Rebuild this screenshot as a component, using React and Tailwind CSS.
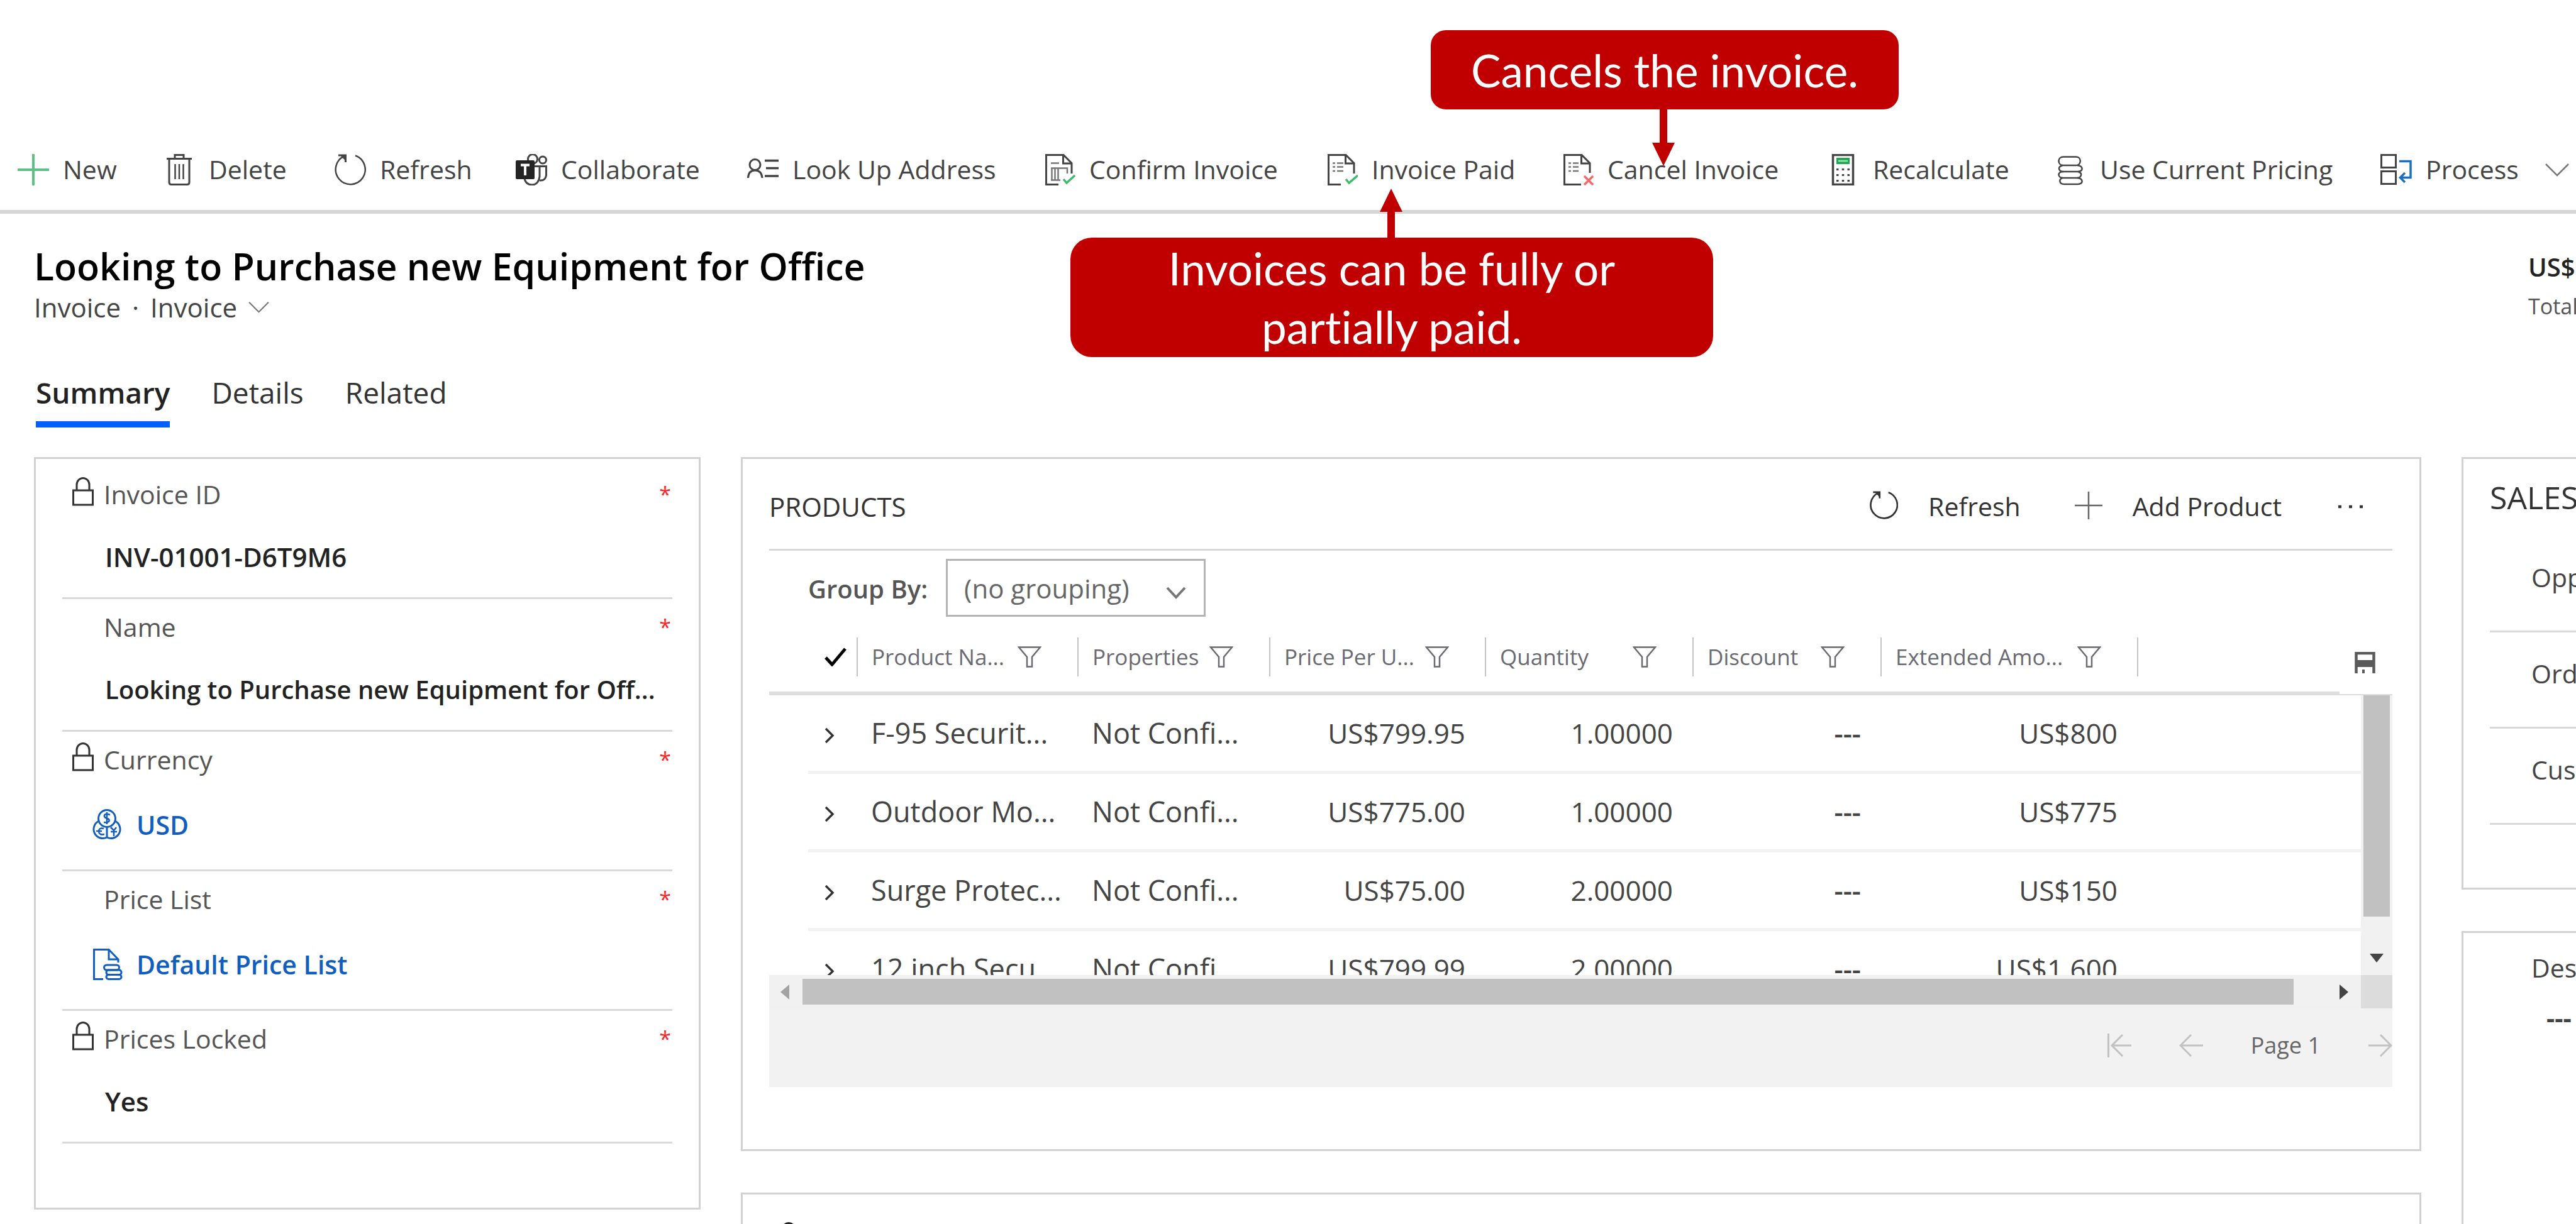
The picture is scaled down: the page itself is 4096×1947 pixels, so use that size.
import React from "react";

function Svg({ w = 50, h = 50, className = "", children }) {
  return (
    <svg
      viewBox={`0 0 ${w} ${h}`}
      width={w}
      height={h}
      fill="none"
      stroke="currentColor"
      strokeWidth="3"
      aria-hidden="true"
      className={`shrink-0 ${className}`}
    >
      {children}
    </svg>
  );
}

const PlusIcon = () => (
  <Svg className="text-[#5cc284]">
    <path d="M25 0V50M0 25H50" strokeWidth="4" />
  </Svg>
);

const TrashIcon = () => (
  <Svg>
    <path d="M5 7.500H45M18 7V1.500H32V7M9 8V45Q9 48.500 12.500 48.500H37.500Q41 48.500 41 45V8" />
    <path d="M18.500 16V40M25 16V40M31.500 16V40" strokeWidth="2.500" />
  </Svg>
);

const RefreshIcon = () => (
  <Svg>
    <path d="M33 2.500A23.500 23.500 0 1 1 15 3.500" strokeWidth="2.500" />
    <path d="M6 2H17.500V13" />
    <path d="M9 2H17.500V11Z" fill="currentColor" stroke="none" />
  </Svg>
);

const TeamsIcon = () => (
  <Svg>
    <circle cx="27" cy="8" r="7.500" />
    <circle cx="43" cy="9.500" r="5.500" />
    <path d="M30 19.500H38V36Q36 49 26 49Q17 49 14 40" />
    <path d="M38 19.500H48.500V34Q47 43 38 42" />
    <rect x="0" y="10" width="30" height="30" rx="2" fill="#242424" stroke="none" />
    <path d="M8 17.500H22M15 17.500V34" stroke="#fff" strokeWidth="4" />
  </Svg>
);

const LookupIcon = () => (
  <Svg>
    <circle cx="12.500" cy="17" r="8.500" />
    <path d="M1.500 38Q2 26 12.500 26Q23 26 24 38" />
    <path d="M28 10.500H50M30 22.500H50M28 35H50" strokeWidth="3.500" />
  </Svg>
);

const docOutline = "M23 48.500H3.500V1.500H31L44 14.500V31M30.500 2V15H44";

const ConfirmIcon = () => (
  <Svg>
    <path d={docOutline} />
    <path d="M11 14.500H24M11 22.500H37V31M12.500 22V42M17.500 22V42M22.500 22V42M11 41.500H26" strokeWidth="2.500" stroke="#777" />
    <path d="M31 40L36 46L49 34" stroke="#3dbb6b" strokeWidth="3.500" />
  </Svg>
);

const PaidIcon = () => (
  <Svg>
    <path d={docOutline} />
    <path d="M10 14.500H14M17 14.500H27M10 20.500H14M17 20.500H27M10 27H14M17 27H27" strokeWidth="2.500" stroke="#777" />
    <path d="M31 40L36 46L50 34" stroke="#3dbb6b" strokeWidth="3.500" />
  </Svg>
);

const CancelIcon = () => (
  <Svg>
    <path d="M30 48.500H3.500V1.500H31L44 14.500V30M30.500 2V15H44" />
    <path d="M10 14.500H14M17 14.500H26M10 20.500H14M17 20.500H26M10 27H14M17 27H26" strokeWidth="2.500" stroke="#777" />
    <path d="M35 35L49 49M49 35L35 49" stroke="#f4686a" strokeWidth="3.500" />
  </Svg>
);

const CalculatorIcon = () => (
  <Svg>
    <rect x="8.500" y="1.500" width="32" height="47" strokeWidth="3.500" />
    <rect x="14" y="6" width="21" height="10" fill="#1fa84d" stroke="none" />
    <path d="M17 11H32" stroke="#9fe0b4" strokeWidth="2.500" />
    <path d="M14 24.500H35M14 33.500H35M14 42.500H35" strokeDasharray="3.500 5.250" />
  </Svg>
);

const CoinsIcon = () => (
  <Svg>
    <g strokeWidth="2.500">
      <path d="M14 4.500H34C43 4.500 43 18 34 18H14C4 18 4 4.500 14 4.500Z" />
      <path d="M13 18C4 20 6 28 14 28H37C46 28 46 19 36 18" />
      <path d="M14 28C4 28 4 38 14 38H35C43 38 45 30 37 28" />
      <path d="M13 38C6 39 7 48 15 48H37C46 48 46 39 36 38" />
    </g>
  </Svg>
);

const ProcessIcon = () => (
  <Svg>
    <rect x="1.500" y="1.500" width="23" height="20" />
    <rect x="1.500" y="27.500" width="23" height="20" />
    <path d="M30 11.500H48V37.500H32M39 30L31.500 37.500L39 45" stroke="#1b6fc2" strokeWidth="3.500" />
  </Svg>
);

const ThinChevron = ({ className = "" }) => (
  <Svg w={38} h={21} className={className}>
    <path d="M1 1L19 19L37 1" strokeWidth="2.500" />
  </Svg>
);

const LockIcon = () => (
  <Svg w={34} h={46}>
    <rect x="1.500" y="21" width="31" height="23" />
    <path d="M7 21V12A10 10.500 0 0 1 27 12V21" />
  </Svg>
);

const CurrencyIcon = () => (
  <Svg w={50} h={50}>
    <circle cx="25" cy="15" r="13.500" />
    <path d="M12 19A14.500 14.500 0 1 0 25 45A14.500 14.500 0 1 0 38 19" />
    <path d="M25 28V45" />
    <path d="M30 9Q20 6 21 12Q23 15 28 16Q31 22 20 21M25 5V24" strokeWidth="2.500" />
    <path d="M20 31Q12 29 12 36Q13 42 21 40M8 35H17M31 29L36 34L40 29M36 34V43M31 36H41" strokeWidth="2.500" />
  </Svg>
);

const PriceListIcon = () => (
  <Svg w={50} h={50}>
    <path d="M19 48.500H4.500V1.500H28L43 17V22M28 2V17H43" />
    <rect x="20.500" y="26" width="24" height="8" rx="4" />
    <rect x="24" y="34" width="24" height="7.500" rx="3.500" />
    <rect x="24" y="41.500" width="24" height="7" rx="3.500" />
  </Svg>
);

const FilterIcon = () => (
  <Svg w={38} h={34}>
    <path d="M2 1.500H36L23 17V32.500H15V17Z" strokeWidth="2.500" />
  </Svg>
);

const RowChevron = () => (
  <Svg w={16} h={26} className="text-[#333]">
    <path d="M2 2L13 13L2 24" strokeWidth="3.500" />
  </Svg>
);

const commands = [
  ["New", PlusIcon],
  ["Delete", TrashIcon],
  ["Refresh", RefreshIcon],
  ["Collaborate", TeamsIcon],
  ["Look Up Address", LookupIcon],
  ["Confirm Invoice", ConfirmIcon],
  ["Invoice Paid", PaidIcon],
  ["Cancel Invoice", CancelIcon],
  ["Recalculate", CalculatorIcon],
  ["Use Current Pricing", CoinsIcon],
  ["Process", ProcessIcon],
];

function CommandBar() {
  return (
    <nav
      aria-label="Commands"
      className="grid grid-cols-[232fr_272fr_288fr_368fr_472fr_449fr_375fr_422fr_361fr_518fr_311fr] border-b-[6px] border-[#d6d6d6] pt-[234px] pb-7 pl-7"
    >
      {commands.map(([label, Icon]) => (
        <button
          key={label}
          type="button"
          className="flex h-[72px] min-w-0 items-center gap-[22px] text-left text-[41px] whitespace-nowrap text-[#444]"
        >
          <Icon />
          {label}
          {label === "Process" && <ThinChevron className="ml-5 text-[#777]" />}
        </button>
      ))}
    </nav>
  );
}

function Callouts() {
  return (
    <div className="font-['Lato',sans-serif] text-[71px] leading-[93px] whitespace-nowrap text-white [font-variant-ligatures:none]">
      <div className="absolute top-12 left-[2275px] flex h-[126px] w-[744px] items-center justify-center rounded-3xl bg-[#c00000]">
        Cancels the invoice.
      </div>
      <svg
        className="absolute top-[172px] left-[2627px] text-[#c00000]"
        width="36"
        height="92"
        viewBox="0 0 36 92"
        fill="currentColor"
        aria-hidden="true"
      >
        <path d="M12 0H24V55H36L18 92L0 55H12Z" />
      </svg>
      <svg
        className="absolute top-[300px] left-[2194px] text-[#c00000]"
        width="36"
        height="80"
        viewBox="0 0 36 80"
        fill="currentColor"
        aria-hidden="true"
      >
        <path d="M18 0L36 37H24V80H12V37H0Z" />
      </svg>
      <div className="absolute top-[378px] left-[1702px] flex h-[190px] w-[1022px] items-center justify-center rounded-[34px] bg-[#c00000] text-center">
        <p>
          Invoices can be fully or
          <br />
          partially paid.
        </p>
      </div>
    </div>
  );
}

function RecordHeader() {
  return (
    <header className="pt-[45px] pl-[54px]">
      <div className="flex justify-between">
        <div>
          <h1 className="text-[59px] leading-[76px] font-semibold text-black">
            Looking to Purchase new Equipment for Office
          </h1>
          <button type="button" className="flex items-center gap-[18px] text-[42px] leading-[56px] text-[#444]">
            <span>Invoice</span>
            <span>·</span>
            <span>Invoice</span>
            <ThinChevron className="h-[18px] w-[33px] text-[#777]" />
          </button>
        </div>
        <div className="w-[76px] shrink-0 whitespace-nowrap">
          <p className="text-[40px] leading-[80px] font-semibold text-[#222]">US$</p>
          <p className="text-[34px] leading-[44px] text-[#555]">Total</p>
        </div>
      </div>
      <div role="tablist" className="flex gap-[66px] pt-[75px] pl-[3px] text-[46px] leading-[64px] text-[#333]">
        <button
          type="button"
          role="tab"
          aria-selected="true"
          className="border-b-[10px] border-[#0060ff] pb-[14px] font-semibold text-[#222]"
        >
          Summary
        </button>
        <button type="button" role="tab" aria-selected="false" className="pb-6">
          Details
        </button>
        <button type="button" role="tab" aria-selected="false" className="pb-6">
          Related
        </button>
      </div>
    </header>
  );
}

function FieldLabel({ id, locked, children }) {
  return (
    <div className="flex h-[60px] items-center justify-between pr-0.5">
      <label htmlFor={id} className="flex items-center text-[41px] leading-[60px] text-[#555]">
        <span className="flex w-[66px] justify-start pb-2 pl-4 text-[#333]">{locked && <LockIcon />}</span>
        {children}
      </label>
      <span className="text-[34px] leading-[60px] text-[#f22]">*</span>
    </div>
  );
}

function TextField({ id, label, value, locked, size = "text-[42px]" }) {
  return (
    <div className="border-b-[3px] border-[#d9d9d9] pt-[14px] pb-[34px]">
      <FieldLabel id={id} locked={locked}>
        {label}
      </FieldLabel>
      <input
        id={id}
        readOnly
        defaultValue={value}
        className={`mt-10 block h-[60px] w-full truncate bg-transparent pl-[68px] leading-[60px] font-semibold text-[#222] outline-none ${size}`}
      />
    </div>
  );
}

function LinkField({ id, label, value, locked, icon }) {
  return (
    <div className="border-b-[3px] border-[#d9d9d9] pt-[14px] pb-[41px]">
      <FieldLabel id={id} locked={locked}>
        {label}
      </FieldLabel>
      <a
        id={id}
        href="#"
        className="mt-11 flex h-[60px] items-center gap-[22px] pl-[46px] text-[41px] leading-[60px] font-semibold text-[#115ebe]"
      >
        {icon}
        {value}
      </a>
    </div>
  );
}

function InvoicePanel() {
  return (
    <section className="border-[3px] border-[#d2d2d2] bg-white px-[42px] pt-3 pb-[102px]">
      <TextField id="invoice-id" label="Invoice ID" value="INV-01001-D6T9M6" locked />
      <TextField id="name" label="Name" value="Looking to Purchase new Equipment for Off..." size="text-[40px]" />
      <LinkField id="currency" label="Currency" value="USD" locked icon={<CurrencyIcon />} />
      <LinkField id="price-list" label="Price List" value="Default Price List" icon={<PriceListIcon />} />
      <TextField id="prices-locked" label="Prices Locked" value="Yes" locked />
    </section>
  );
}

const headings = ["Product Na...", "Properties", "Price Per U...", "Quantity", "Discount", "Extended Amo..."];

const rows = [
  ["F-95 Securit...", "Not Confi...", "US$799.95", "1.00000", "---", "US$800"],
  ["Outdoor Mo...", "Not Confi...", "US$775.00", "1.00000", "---", "US$775"],
  ["Surge Protec...", "Not Confi...", "US$75.00", "2.00000", "---", "US$150"],
  ["12 inch Secu...", "Not Confi...", "US$799.99", "2.00000", "---", "US$1,600"],
];

function ProductTable() {
  return (
    <table className="w-full table-fixed border-separate border-spacing-0 text-left">
      <colgroup>
        <col className="w-[62px]" />
        <col className="w-[77px]" />
        <col className="w-[351px]" />
        <col className="w-[305px]" />
        <col className="w-[343px]" />
        <col className="w-[330px]" />
        <col className="w-[299px]" />
        <col className="w-[408px]" />
        <col />
        <col className="w-[34px]" />
      </colgroup>
      <thead>
        <tr className="h-[116px]">
          <th colSpan={2} className="border-b-[6px] border-[#dedddb] p-0">
            <Svg w={36} h={30} className="ml-[88px] text-black">
              <path d="M2 16L12 27L33 2" strokeWidth="5" />
            </Svg>
          </th>
          {headings.map((heading) => (
            <th key={heading} className="border-b-[6px] border-[#dedddb] p-0 font-normal">
              <div className="flex h-[62px] items-center justify-between border-l-2 border-[#c4c4c4] pr-[57px] pl-[22px] text-[35px] whitespace-nowrap text-[#6a6a73]">
                {heading}
                <FilterIcon />
              </div>
            </th>
          ))}
          <th className="border-b-[6px] border-[#dedddb] p-0">
            <div className="h-[62px] border-l-2 border-[#c4c4c4]" />
          </th>
          <th className="border-b-2 border-[#dedddb] p-0" />
        </tr>
      </thead>
      <tbody className="text-[#444]">
        {rows.map((row) => (
          <tr key={row[0]} className="h-[125px]">
            <td />
            <td className="border-b-[5px] border-[#f2f2f2] p-0">
              <button type="button" aria-label="Expand row" className="block pt-2 pl-[26px]">
                <RowChevron />
              </button>
            </td>
            {row.map((cell, i) => (
              <td
                key={i}
                className={
                  i < 2
                    ? "border-b-[5px] border-[#f2f2f2] p-0 pl-[23px] text-[45px] whitespace-nowrap"
                    : "border-b-[5px] border-[#f2f2f2] p-0 pr-[31px] text-right text-[44px] whitespace-nowrap"
                }
              >
                {cell === "---" ? <span className="font-semibold">---</span> : cell}
              </td>
            ))}
            <td colSpan={2} className="border-b-[5px] border-[#f2f2f2]" />
          </tr>
        ))}
      </tbody>
    </table>
  );
}

function ProductsPanel() {
  return (
    <section className="border-[3px] border-[#d2d2d2] bg-white pr-[43px] pb-[99px] pl-[42px]">
      <div className="flex h-[146px] items-center border-b-[3px] border-[#d9d9d9] pt-2 pr-[47px] text-[41px] whitespace-nowrap text-[#333]">
        <h2 className="mr-auto text-[42px] font-medium">PRODUCTS</h2>
        <button type="button" className="mr-[86px] flex items-center gap-[48px]">
          <svg viewBox="0 0 50 50" className="mb-1 size-[45px]" fill="none" stroke="currentColor" strokeWidth="3" aria-hidden="true">
            <path d="M33 2.500A23.500 23.500 0 1 1 15 3.500M6 2H17.500V13" />
            <path d="M9 2H17.500V11Z" fill="currentColor" stroke="none" />
          </svg>
          Refresh
        </button>
        <button type="button" className="mr-[90px] flex items-center gap-[48px]">
          <Svg w={44} h={44} className="mb-1 text-[#666]">
            <path d="M22 0V44M0 22H44" strokeWidth="2.500" />
          </Svg>
          Add Product
        </button>
        <button type="button" aria-label="More commands">
          <Svg w={39} h={6}>
            <path d="M0 3H5M17 3H22M34 3H39" strokeWidth="4.500" />
          </Svg>
        </button>
      </div>

      <div className="flex h-[114px] items-start pt-[13px] pl-[62px]">
        <label htmlFor="group-by" className="w-[219px] text-[40px] leading-[96px] font-semibold whitespace-nowrap text-[#555]">
          Group By:
        </label>
        <div className="relative">
          <select
            id="group-by"
            className="block h-[92px] w-[413px] appearance-none border-[3px] border-[#b4b4b4] bg-white pl-[26px] text-[42px] text-[#666]"
          >
            <option>(no grouping)</option>
          </select>
          <Svg w={32} h={20} className="pointer-events-none absolute top-11 right-[31px] text-[#777]">
            <path d="M2 2L16 17L30 2" strokeWidth="4" />
          </Svg>
        </div>
      </div>

      <div className="relative flex h-[561px]">
        <div className="min-w-0 flex-1 overflow-hidden">
          <ProductTable />
        </div>
        <div className="flex w-[50px] flex-col pt-[114px]">
          <div className="flex flex-1 flex-col items-center justify-between border-t-2 border-[#dedddb] bg-[#f1f1f1] pb-5">
            <div className="h-[352px] w-[42px] bg-[#c1c1c1]" />
            <svg width="22" height="14" viewBox="0 0 22 14" fill="#444" aria-hidden="true">
              <path d="M0 0H22L11 14Z" />
            </svg>
          </div>
        </div>
        <button type="button" aria-label="Save" className="absolute top-[47px] right-[27px]">
          <Svg w={33} h={34} className="text-[#5a5a5a]">
            <path d="M2.500 34V2H30.500V34" strokeWidth="4.500" />
            <path d="M3 13H30V24H3Z" fill="currentColor" stroke="none" />
            <path d="M14 28V34" strokeWidth="4" />
          </Svg>
        </button>
      </div>

      <div className="flex h-[53px] bg-[#f1f1f1]">
        <div className="flex flex-1 items-center pr-5 pl-[18px]">
          <svg width="14" height="24" viewBox="0 0 14 24" fill="#a3a3a3" aria-hidden="true">
            <path d="M14 0V24L0 12Z" />
          </svg>
          <div className="mr-[73px] ml-[21px] h-[41px] flex-1 bg-[#c1c1c1]" />
          <svg width="14" height="24" viewBox="0 0 14 24" fill="#444" aria-hidden="true">
            <path d="M0 0V24L14 12Z" />
          </svg>
        </div>
        <div className="w-[50px] bg-[#dcdcdc]" />
      </div>

      <div className="flex h-[125px] items-center justify-end gap-[76px] bg-[#f2f2f2] pb-2 text-[36px] text-[#666]">
        <button type="button" aria-label="First page">
          <Svg w={38} h={38} className="text-[#c2c2c2]">
            <path d="M1.500 0V38M38 19H7M24 2L7 19L24 36" />
          </Svg>
        </button>
        <button type="button" aria-label="Previous page">
          <Svg w={38} h={38} className="text-[#c2c2c2]">
            <path d="M38 19H2M19 2L2 19L19 36" />
          </Svg>
        </button>
        <span>Page 1</span>
        <button type="button" aria-label="Next page">
          <Svg w={38} h={38} className="text-[#c2c2c2]">
            <path d="M0 19H36M19 2L36 19L19 36" />
          </Svg>
        </button>
      </div>
    </section>
  );
}

function SalesPanel() {
  return (
    <section className="overflow-hidden border-[3px] border-r-0 border-[#d2d2d2] bg-white pt-[25px] pb-[100px] pl-[42px]">
      <h2 className="mb-[26px] text-[50px] leading-[72px] text-[#333]">SALES</h2>
      {["Opp", "Ord", "Cus"].map((label) => (
        <div key={label} className="border-b-[3px] border-[#d9d9d9] pt-[35px] pb-[55px] pl-[66px] text-[41px] leading-[60px] text-[#444]">
          {label}
        </div>
      ))}
    </section>
  );
}

export default function App() {
  return (
    <div className="relative h-screen overflow-hidden bg-white font-['Open_Sans','Noto_Sans',sans-serif]">
      <CommandBar />
      <RecordHeader />
      <main className="grid grid-cols-[1060fr_2672fr_182fr] items-start gap-16 pt-[47px] pl-[54px]">
        <InvoicePanel />
        <div className="flex min-w-0 flex-col gap-[66px]">
          <ProductsPanel />
          <section className="h-[400px] border-[3px] border-[#d2d2d2] bg-white pt-11 pl-[56px] text-[#222]">
            <LockIcon />
          </section>
        </div>
        <div className="flex min-w-0 flex-col gap-[66px]">
          <SalesPanel />
          <section className="h-[800px] overflow-hidden border-[3px] border-r-0 border-[#d2d2d2] bg-white pt-[25px] pl-[108px] text-[41px] leading-[60px] text-[#444]">
            <p>Des</p>
            <p className="mt-5 pl-6 font-bold">---</p>
          </section>
        </div>
      </main>
      <Callouts />
    </div>
  );
}
